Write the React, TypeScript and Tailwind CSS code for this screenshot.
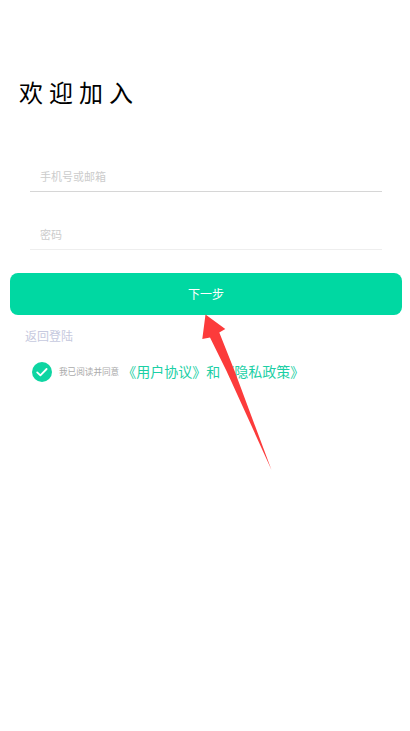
export default function App() {
  const cjk = { fontFamily: '"Noto Sans CJK SC", "Noto Sans", sans-serif' };
  return (
    <div className="relative h-[731px] w-[410px] overflow-hidden bg-white" style={cjk}>
      <div className="pl-[19px] pt-[74px]">
        <h1 className="text-[24px] leading-[36px] tracking-[6px] font-normal text-black">欢迎加入</h1>
      </div>
      <div className="ml-[30px] mr-[28px] mt-[52px]">
        <div className="flex h-[30px] items-center border-b border-[#d6d6d6] pl-[10px] text-[11px] text-[#cccccc]">手机号或邮箱</div>
        <div className="mt-[27px] flex h-[31px] items-center border-b border-[#eeeeee] pl-[10px] text-[11px] text-[#cccccc]">密码</div>
      </div>
      <button className="mx-[10px] mt-[23px] flex h-[42px] w-[392px] items-center justify-center rounded-[8px] bg-[#00d8a2] text-[12px] text-white">下一步</button>
      <div className="ml-[25px] mt-[12px] text-[12px] leading-[18px] text-[#c6c9de]">返回登陆</div>
      <div className="ml-[32px] mt-[16px] flex items-center">
        <svg width="20" height="20" viewBox="0 0 20 20" className="shrink-0">
          <circle cx="10" cy="10" r="10" fill="#0ed5a2" />
          <path d="M5.2 10.4l3.2 3 6.2-6.4" fill="none" stroke="#fff" strokeWidth="1.8" strokeLinecap="round" strokeLinejoin="round" />
        </svg>
        <span className="ml-[7px] text-[8.6px] text-[#ababab]">我已阅读并同意</span>
        <span className="ml-[3px] text-[14px] text-[#1ccfa5]">《用户协议》和《隐私政策》</span>
      </div>
      <svg className="pointer-events-none absolute left-0 top-0" width="410" height="731" viewBox="0 0 410 731">
        <polygon points="205.5,314.5 225.3,329 219.3,332.5 235,372 271.5,470 227,372 210,337.5 202.3,339" fill="#fc3b3b" />
      </svg>
    </div>
  );
}
